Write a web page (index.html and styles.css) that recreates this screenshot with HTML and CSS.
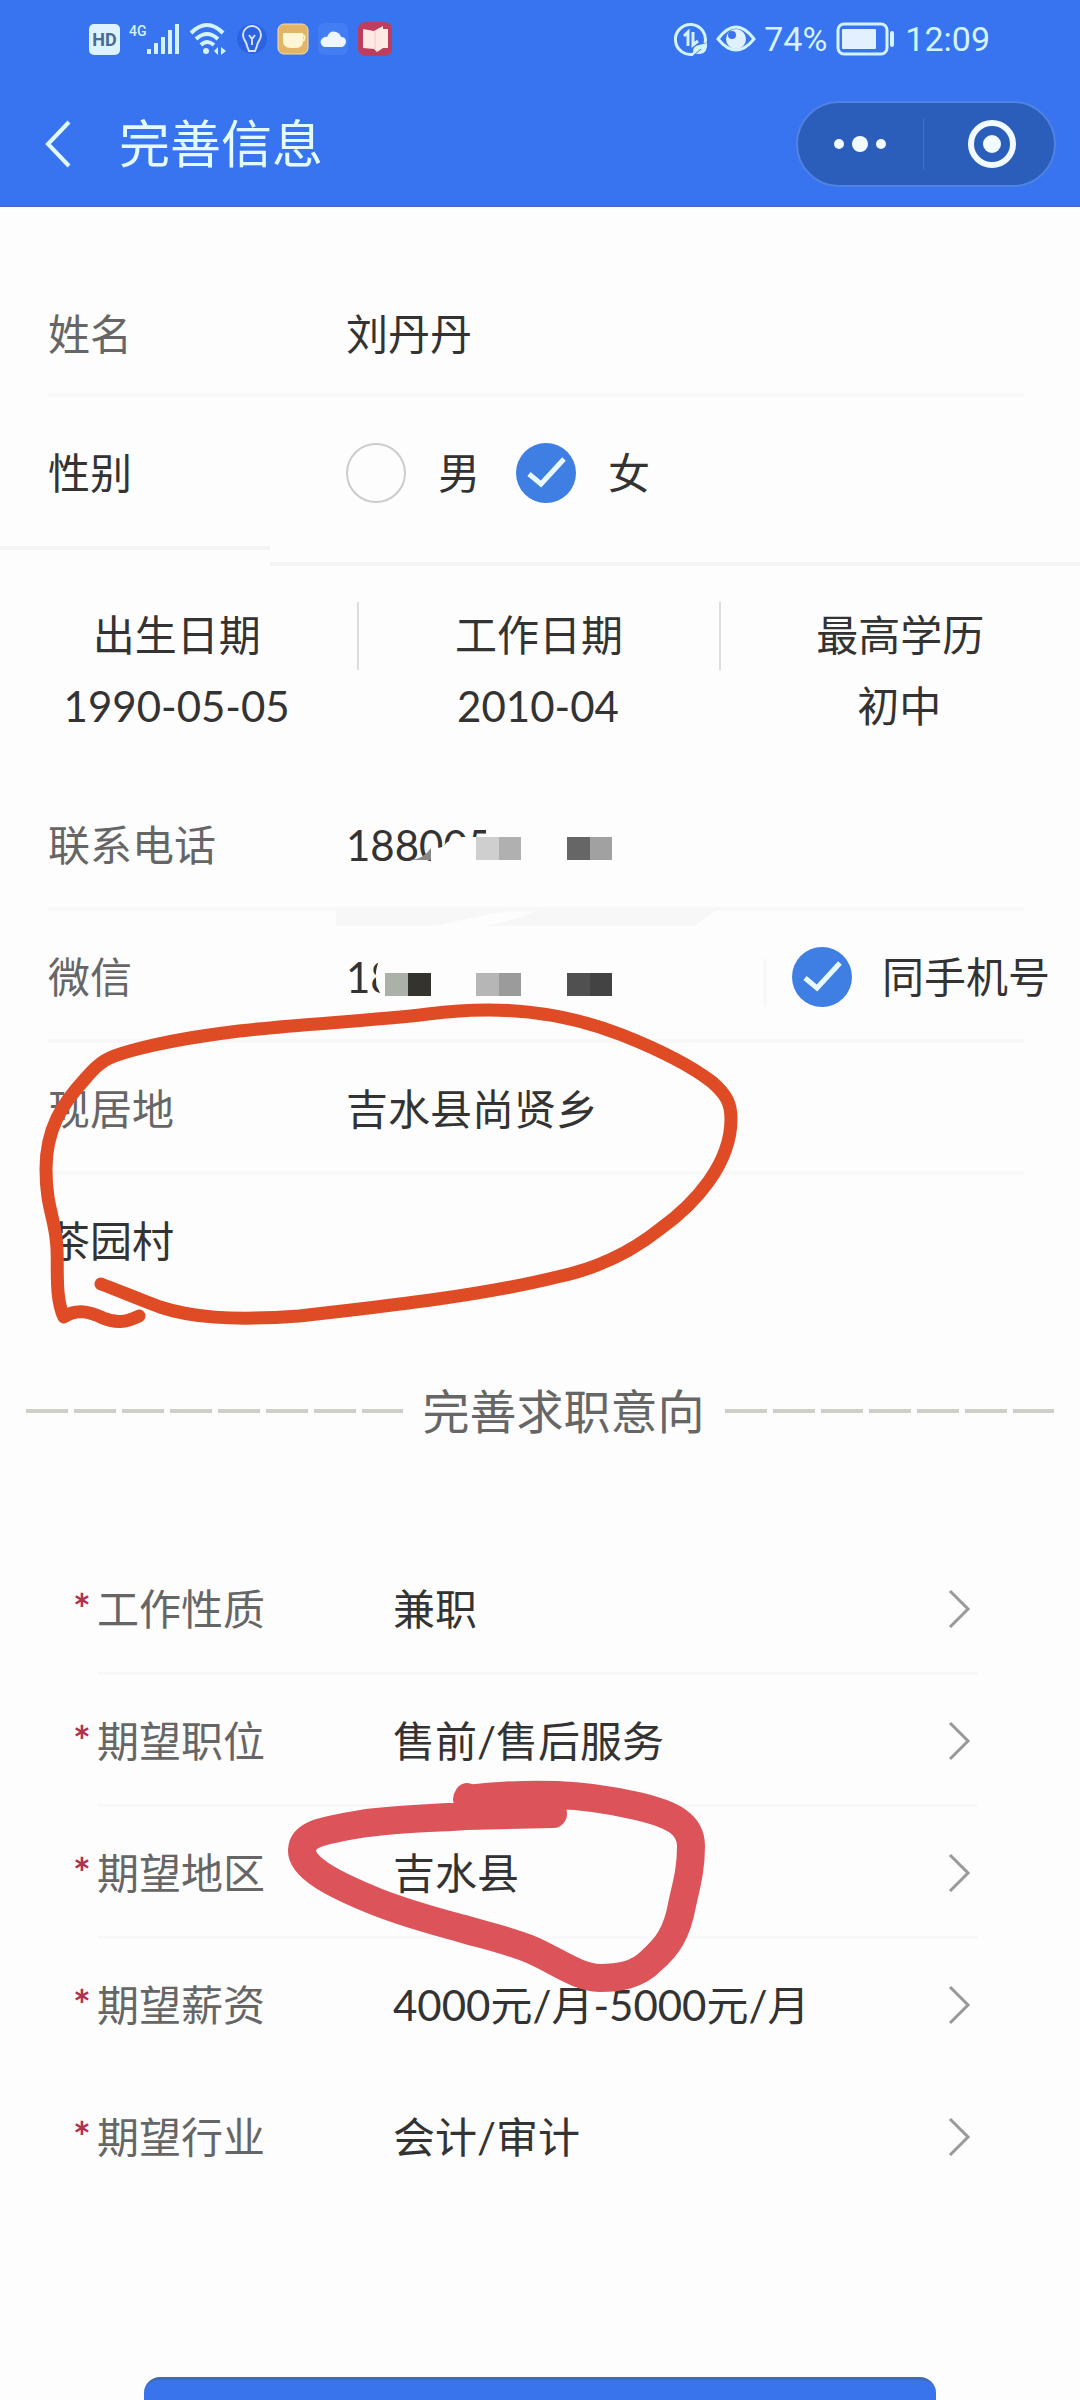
FILE: index.html
```html
<!DOCTYPE html>
<html lang="zh-CN">
<head>
<meta charset="utf-8">
<meta name="viewport" content="width=device-width, initial-scale=1">
<title>完善信息</title>
<link rel="stylesheet" href="styles.css">
</head>
<body>
<div class="app">
  <header class="header">
    <div class="status">
      <div class="status-group status-left">
        <span class="hd">HD</span>
        <span class="cell">
          <span class="net">4G</span>
          <svg width="34" height="32" viewBox="0 0 34 32" fill="#d3f3ff"><rect x="1" y="26" width="4" height="5"/><rect x="8" y="20" width="4" height="11"/><rect x="15" y="14" width="4" height="17"/><rect x="22" y="7" width="4" height="24"/><rect x="29" y="1" width="4" height="30"/></svg>
        </span>
        <svg width="38" height="34" viewBox="0 0 38 34" fill="none" stroke="#d3f3ff" stroke-width="4"><path d="M2 11Q18 -5 34 11M7 17Q18 7 29 17M12 23Q18 17 25 23"/><circle cx="17" cy="29" r="3" fill="#d3f3ff" stroke="none"/><path d="M25 29l4-4v8zM37 29l-5-4v8z" fill="#d3f3ff" stroke="none"/></svg>
        <svg width="32" height="34" viewBox="0 0 32 34" fill="none" stroke="#d3e3ff" stroke-width="2"><circle cx="16" cy="17" r="15" fill="#2d63e2" stroke="none"/><path d="M11 24C11 20 7 18 7 13a9 9 0 0 1 18 0c0 5-4 7-4 11l-2 5h-6zM16 23v-8M13 13l3 4 3-4"/></svg>
        <svg width="32" height="32" viewBox="0 0 32 32"><rect x="1" y="1" width="30" height="30" rx="6" fill="#e2b566" stroke="#f3dfae"/><path d="M6 10h20v8q0 7-7 7h-5q-8 0-8-7z" fill="#fff6d5"/><path d="M25 12q4 0 2 5l-3 2" fill="none" stroke="#fff0c0" stroke-width="2"/></svg>
        <svg width="30" height="32" viewBox="0 0 30 32"><rect width="30" height="32" rx="6" fill="#427df3"/><path d="M6 24a5 5 0 0 1-1-9q2-2 4-1 3-7 9-5 4 1 5 5 5 0 5 5-1 5-5 5z" fill="#eef6ff"/></svg>
        <svg width="36" height="36" viewBox="0 0 36 36"><rect x="1" y="1" width="34" height="34" rx="7" fill="#bd3e5c"/><path d="M6 8l11 2 9-5v3h5v19h-5l-6 4-3-3-11-1z" fill="#ffe9e4"/><path d="M18 10v18" stroke="#f6c9c5"/></svg>
      </div>
      <div class="status-group status-right">
        <svg width="34" height="36" viewBox="0 0 34 36" fill="none" stroke="#d3f3ff" stroke-width="3"><path d="M31 22A15 15 0 1 0 20 33"/><path d="M10 15l4-4v14M19 11v13l5-4"/><path d="M19 33q-1-8 6-9l8-2q1 10-7 11z" fill="#d3f3ff" stroke="none"/><path d="M19 35l8-7" stroke="#3974ed" stroke-width="1"/></svg>
        <svg width="40" height="30" viewBox="0 0 40 30" fill="none" stroke="#d3f3ff" stroke-width="3"><path d="M2 15Q20-9 38 15Q20 37 2 15z"/><circle cx="20" cy="15" r="10" fill="#dff1ff" stroke="none"/><circle cx="16" cy="11" r="4" fill="#3974ed" stroke="none"/></svg>
        <span class="status-text">74%</span>
        <svg width="62" height="34" viewBox="0 0 62 34"><rect x="3" y="2" width="49" height="30" rx="6" fill="none" stroke="#d3f3ff" stroke-width="3"/><rect x="7" y="7" width="34" height="20" rx="1" fill="#e3f0ff"/><rect x="55" y="9" width="4" height="16" rx="2" fill="#d3f3ff"/></svg>
        <time class="status-text">12:09</time>
      </div>
    </div>
    <nav class="nav">
      <button class="icon-button" aria-label="返回"><svg width="28" height="48" viewBox="0 0 28 48" fill="none" stroke="#e3fbff" stroke-width="4"><path d="M25 2L4 24l21 22"/></svg></button>
      <h1 class="title">完善信息</h1>
      <div class="capsule">
        <button class="icon-button capsule-half" aria-label="更多"><svg width="52" height="20" viewBox="0 0 52 20" fill="#f2fbff"><circle cx="5" cy="10" r="5"/><circle cx="26" cy="10" r="8"/><circle cx="47" cy="10" r="5"/></svg></button>
        <span class="capsule-line"></span>
        <button class="icon-button capsule-half capsule-close" aria-label="关闭"><svg width="50" height="50" viewBox="0 0 50 50"><circle cx="25" cy="25" r="21" fill="none" stroke="#f2fbff" stroke-width="6"/><circle cx="25" cy="25" r="9" fill="#f2fbff"/></svg></button>
      </div>
    </nav>
  </header>

  <main class="main">
    <form class="form">
      <div class="row row-name">
        <label class="label" for="name">姓名</label>
        <input class="value" id="name" value="刘丹丹">
      </div>
      <div class="row row-gender" role="radiogroup" aria-labelledby="gender-label">
        <span class="label dark" id="gender-label">性别</span>
        <label class="choice"><input class="tick" type="radio" name="gender">男</label>
        <label class="choice"><input class="tick" type="radio" name="gender" checked>女</label>
      </div>
      <div class="step"><span class="step-left"></span><span class="step-right"></span></div>

      <dl class="facts">
        <div class="fact"><dt>出生日期</dt><dd>1990-05-05</dd></div>
        <div class="fact"><dt>工作日期</dt><dd>2010-04</dd></div>
        <div class="fact"><dt>最高学历</dt><dd>初中</dd></div>
      </dl>

      <section class="contact">
        <div class="row lined">
          <label class="label" for="phone">联系电话</label>
          <input class="value" id="phone" value="188005">
        </div>
        <div class="row lined">
          <label class="label" for="wechat">微信</label>
          <input class="value" id="wechat" value="18">
          <label class="choice same"><input class="tick" type="checkbox" checked>同手机号</label>
        </div>
        <div class="row lined">
          <label class="label" for="home">现居地</label>
          <input class="value" id="home" value="吉水县尚贤乡">
        </div>
        <div class="row">
          <input class="value" aria-label="详细地址" value="茶园村">
        </div>
        <svg class="ink" width="780" height="570" viewBox="0 0 780 570" fill="none">
          <path d="M431 83V68q12 3 15-4 8-6 17-6h23V44h140v39z" fill="#fdfdfd"/>
          <path d="M409 81q14 0 22-12v12z" fill="#888"/>
          <path d="M476 58h23v23h-23z" fill="#cfcfcf"/><path d="M499 58h22v23h-22z" fill="#b0b0b0"/>
          <path d="M567 58h23v23h-23z" fill="#666"/><path d="M590 58h22v23h-22z" fill="#a1a1a1"/>
          <path d="M336 130h190q-40 4-90 17H336zM540 130h178l-24 17H482q30-4 58-17z" fill="#f7f7f7"/>
          <path d="M382 176q-12 20-1 40h35v-40z" fill="#fdfdfd"/>
          <path d="M385 194h23v23h-23z" fill="#abb0a9"/><path d="M408 194h23v23h-23z" fill="#34332d"/>
          <path d="M476 194h23v23h-23z" fill="#b6b6b6"/><path d="M499 194h22v23h-22z" fill="#9b9b9b"/>
          <path d="M567 194h23v23h-23z" fill="#505050"/><path d="M590 194h22v23h-22z" fill="#434343"/>
          <path d="M765 180v48" stroke="#f8f8f8" stroke-width="4"/>
          <path d="M139 537C125 544 115 544 103 539C90 533 77 529 64 538C55 520 58 490 57 470C56 440 46 430 46 390C46 350 62 325 85 300C100 282 108 278 130 272C165 262 200 257 239 252C300 245 370 242 428 235C500 226 560 232 622 256C665 273 695 290 712 303C727 316 731 325 731 340C731 385 695 425 660 450C630 474 595 490 557 498C480 517 380 528 299 537C230 542 190 538 160 528C138 520 120 512 101 505" stroke="#df4b25" stroke-width="13" stroke-linecap="round" stroke-linejoin="round"/>
        </svg>
      </section>

      <h2 class="divider"><span class="dashes dashes-left"></span>完善求职意向<span class="dashes dashes-right"></span></h2>

      <section class="wishes">
        <button type="button" class="wish"><span class="star">*</span><span class="wish-label">工作性质</span><span class="wish-value">兼职</span><svg class="chevron" viewBox="0 0 24 40"><path d="M2 2l18 18L2 38"/></svg></button>
        <button type="button" class="wish"><span class="star">*</span><span class="wish-label">期望职位</span><span class="wish-value">售前/售后服务</span><svg class="chevron" viewBox="0 0 24 40"><path d="M2 2l18 18L2 38"/></svg></button>
        <button type="button" class="wish"><span class="star">*</span><span class="wish-label">期望地区</span><span class="wish-value">吉水县</span><svg class="chevron" viewBox="0 0 24 40"><path d="M2 2l18 18L2 38"/></svg></button>
        <button type="button" class="wish"><span class="star">*</span><span class="wish-label">期望薪资</span><span class="wish-value">4000元/月-5000元/月</span><svg class="chevron" viewBox="0 0 24 40"><path d="M2 2l18 18L2 38"/></svg></button>
        <button type="button" class="wish"><span class="star">*</span><span class="wish-label">期望行业</span><span class="wish-value">会计/审计</span><svg class="chevron" viewBox="0 0 24 40"><path d="M2 2l18 18L2 38"/></svg></button>
        <svg class="ink" width="780" height="460" viewBox="0 0 780 460" fill="none">
          <path d="M467 256C500 252 530 251 557 252C590 253 615 258 637 263C672 271 691 281 691 303C691 328 686 343 682 362C677 390 667 404 652 417C637 433 617 435 600 435C575 434 555 416 527 405C500 395 480 391 460 385C430 377 400 368 377 359C335 342 301 325 302 307C303 290 325 287 367 280C410 275 440 275 467 273L553 271" stroke="#dc535a" stroke-width="28" stroke-linecap="round" stroke-linejoin="round"/>
          <path d="M467 252v20" stroke="#dc535a" stroke-width="24" stroke-linecap="round"/>
        </svg>
      </section>

      <button type="submit" class="submit" aria-label="保存"></button>
    </form>
  </main>
</div>
</body>
</html>
```
FILE: styles.css
```css
* { box-sizing: border-box; }

body {
  margin: 0;
  background: #fdfdfd;
  color: #333;
  font: 42px/60px Lato, "Noto Sans CJK SC", sans-serif;
}

button, input {
  font: inherit;
  color: inherit;
  border: 0;
  padding: 0;
  margin: 0;
  background: none;
}

.app { height: 100vh; overflow: hidden; }

/* Header */
.header {
  background: #3974f0;
  border-bottom: 2px solid #426fb5;
  padding-bottom: 18px;
}
.status {
  display: flex;
  justify-content: space-between;
  align-items: center;
  height: 78px;
  padding: 0 90px 0 89px;
}
.status-group { display: flex; align-items: center; }
.status-left { gap: 9px; }
.status-right { gap: 8px; }
.hd {
  width: 31px;
  height: 31px;
  border-radius: 5px;
  background: #ddf3ff;
  color: #4a6a94;
  font: bold 18px/31px Roboto, sans-serif;
  text-align: center;
}
.cell { display: flex; align-items: flex-start; }
.net { width: 17px; color: #d3f3ff; font: 500 14px/16px Roboto, sans-serif; }
.status-text { color: #d3f3ff; font: 34px/40px Roboto, sans-serif; }

.nav {
  display: flex;
  align-items: center;
  padding: 23px 24px 0 44px;
  height: 109px;
}
.icon-button { display: flex; align-items: center; justify-content: center; cursor: pointer; }
.title {
  flex: 1;
  margin: 0 0 0 47px;
  font-size: 51px;
  font-weight: 400;
  color: #e3fbff;
}
.capsule {
  display: flex;
  align-items: center;
  width: 260px;
  height: 86px;
  border: 2px solid #4f82e2;
  border-radius: 43px;
  background: #2b5dba;
}
.capsule-half { flex: 1; height: 100%; }
.capsule-close { padding-left: 6px; }
.capsule-line { width: 1px; height: 50px; background: #4272c8; }

/* Rows */
.main { padding-top: 63px; }
.row {
  display: flex;
  align-items: center;
  height: 132px;
  padding: 0 48px;
}
.row-name { height: 127px; background: linear-gradient(#f8f8f8, #f8f8f8) 48px 100% / calc(100% - 104px) 4px no-repeat; }
.row-gender { height: 149px; padding-top: 2px; }
.lined { background: linear-gradient(#f8f8f8, #f8f8f8) 48px 100% / calc(100% - 104px) 4px no-repeat; }
.label { flex: none; width: 298px; color: #666; }
.dark { color: #333; }
.value { flex: 1; min-width: 0; height: 60px; outline: 0; }

.choice { display: flex; align-items: center; gap: 32px; margin-right: 36px; }
.tick {
  appearance: none;
  width: 60px;
  height: 60px;
  border: 2px solid #ccc;
  border-radius: 50%;
}
.tick:checked {
  border: 0;
  background: #3f7fe3 url("data:image/svg+xml,%3Csvg xmlns='http://www.w3.org/2000/svg' viewBox='0 0 60 60'%3E%3Cpath d='M13 31l12 10 23-25' fill='none' stroke='%23e8faff' stroke-width='5'/%3E%3C/svg%3E");
}
.same { gap: 30px; margin-right: -18px; }

.step { display: flex; height: 20px; }
.step-left { width: 25%; height: 4px; background: #f4f4f4; }
.step-right { flex: 1; height: 4px; align-self: flex-end; background: #f4f4f4; }

/* Facts */
.facts {
  display: grid;
  grid-template-columns: repeat(3, 1fr);
  margin: 36px 0 37px -4px;
  text-align: center;
}
.fact dt { height: 68px; line-height: 66px; }
.fact dd { margin: 0; line-height: 72px; }
.fact + .fact dt { border-left: 2px solid #ddd; }

.contact, .wishes { position: relative; }
.ink { position: absolute; left: 0; top: 0; pointer-events: none; }

/* Section heading */
.divider {
  display: flex;
  align-items: center;
  gap: 20px;
  margin: 74px 26px 102px;
  font-size: 47px;
  font-weight: 400;
  color: #666;
}
.dashes {
  height: 4px;
  background: repeating-linear-gradient(90deg, #cfcfca 0 42px, transparent 42px 48px);
}
.dashes-left { flex: 8; }
.dashes-right { flex: 7; }

/* Wishes */
.wish {
  display: flex;
  align-items: center;
  width: 100%;
  height: 132px;
  padding: 0 108px 0 73px;
  text-align: left;
  cursor: pointer;
  background: linear-gradient(#f8f8fa, #f8f8fa) 98px 100% / calc(100% - 200px) 3px no-repeat;
}
.wish:nth-of-type(n+4) { background: none; }
.star { width: 24px; color: #b0304f; font-weight: 700; }
.wish-label { width: 296px; color: #666; }
.wish-value { flex: 1; }
.chevron { width: 24px; height: 40px; fill: none; stroke: #999; stroke-width: 3; }

.submit {
  display: block;
  width: calc(100% - 288px);
  height: 120px;
  margin: 174px auto 0;
  border-top: 3px solid #3f6bb0;
  border-radius: 16px;
  background: #3974ec;
}
```
